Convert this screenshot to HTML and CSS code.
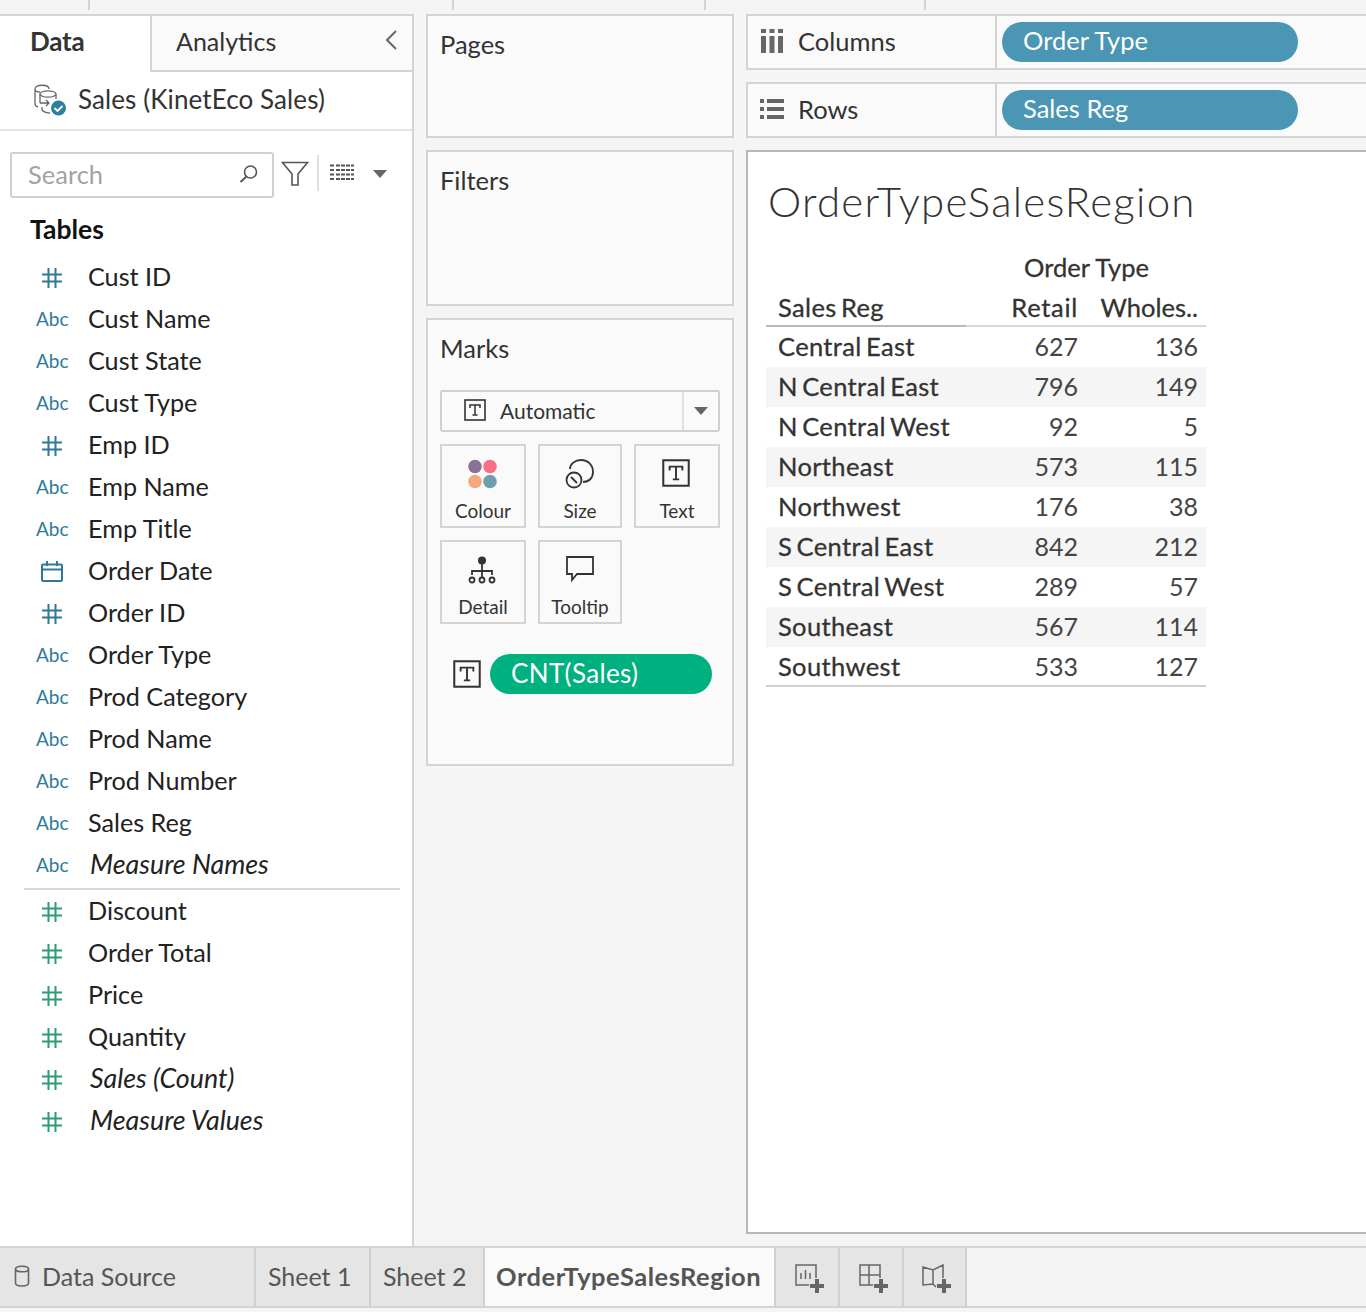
FILE: index.html
```html
<!DOCTYPE html>
<html>
<head>
    <title>OrderTypeSalesRegion</title>
    <link rel="stylesheet" href="styles.css">
</head>
<body>
    <div class="top-strip">
        <span class="tick tick-a"></span>
        <span class="tick tick-b"></span>
        <span class="tick tick-c"></span>
        <span class="tick tick-d"></span>
    </div>

    <div class="workspace">
        <div class="side">
            <div class="side-tabs">
                <div class="tab-data">Data</div>
                <div class="tab-analytics">
                    <span>Analytics</span>
                    <svg class="collapse" width="14" height="22" viewBox="0 0 14 22"><path d="M12 2 3 11l9 9" fill="none" stroke="#666" stroke-width="2"/></svg>
                </div>
            </div>
            <div class="source">
                <svg width="34" height="34" viewBox="0 0 34 34">
                    <g fill="none" stroke="#666" stroke-width="1.300">
                        <path d="M2 6c0-5 14-5 14 0M2 6v15c0 1.500 1 2.500 3 3M2 6c0 2 2 3 5 3"/>
                        <ellipse cx="15" cy="11" rx="8" ry="3.200"/>
                        <path d="M7 11v9M23 11v5M7 20h9M13 17l3 3-3 3M9 24v3c2 2 5 3 8 3"/>
                    </g>
                    <circle cx="25.500" cy="25" r="7.500" fill="#2f7e9f"/>
                    <path d="m21.500 25 3 3 5-5" fill="none" stroke="#fff" stroke-width="1.800"/>
                </svg>
                <span>Sales (KinetEco Sales)</span>
            </div>
            <div class="tools">
                <div class="search">
                    <span>Search</span>
                    <svg width="20" height="20" viewBox="0 0 20 20"><circle cx="11.500" cy="8" r="6" fill="none" stroke="#555" stroke-width="1.600"/><path d="M7.500 12.500 1.500 18" stroke="#555" stroke-width="1.800"/></svg>
                </div>
                <svg class="funnel" width="28" height="26" viewBox="0 0 28 26"><path d="M1.500 1.500h25L17 13v11h-6V13z" fill="none" stroke="#555" stroke-width="1.600"/></svg>
                <span class="tool-sep"></span>
                <svg class="list-view" width="26" height="20" viewBox="0 0 26 20"><path d="M1 2.500h4M7 2.500h18M1 7h4M7 7h18M1 11.500h4M7 11.500h18M1 16h4M7 16h18" stroke="#555" stroke-width="2" stroke-dasharray="4 1"/></svg>
                <span class="caret"></span>
            </div>
            <h2 class="tables-title">Tables</h2>
            <ul class="fields">
                <li><svg class="ico" width="22" height="22" viewBox="0 0 22 22"><use href="#hash-blue"/></svg>Cust ID</li>
                <li><i class="abc">Abc</i>Cust Name</li>
                <li><i class="abc">Abc</i>Cust State</li>
                <li><i class="abc">Abc</i>Cust Type</li>
                <li><svg class="ico" width="22" height="22" viewBox="0 0 22 22"><use href="#hash-blue"/></svg>Emp ID</li>
                <li><i class="abc">Abc</i>Emp Name</li>
                <li><i class="abc">Abc</i>Emp Title</li>
                <li><svg class="ico" width="22" height="22" viewBox="0 0 22 22"><g fill="none" stroke="#2f7a9c" stroke-width="2"><rect x="1" y="3.500" width="20" height="16.500" rx="1"/><path d="M1 8.500h20M6 0v5M16 0v5"/></g></svg>Order Date</li>
                <li><svg class="ico" width="22" height="22" viewBox="0 0 22 22"><use href="#hash-blue"/></svg>Order ID</li>
                <li><i class="abc">Abc</i>Order Type</li>
                <li><i class="abc">Abc</i>Prod Category</li>
                <li><i class="abc">Abc</i>Prod Name</li>
                <li><i class="abc">Abc</i>Prod Number</li>
                <li><i class="abc">Abc</i>Sales Reg</li>
                <li class="generated"><i class="abc">Abc</i>Measure Names</li>
            </ul>
            <ul class="fields measures">
                <li><svg class="ico" width="22" height="22" viewBox="0 0 22 22"><use href="#hash-green"/></svg>Discount</li>
                <li><svg class="ico" width="22" height="22" viewBox="0 0 22 22"><use href="#hash-green"/></svg>Order Total</li>
                <li><svg class="ico" width="22" height="22" viewBox="0 0 22 22"><use href="#hash-green"/></svg>Price</li>
                <li><svg class="ico" width="22" height="22" viewBox="0 0 22 22"><use href="#hash-green"/></svg>Quantity</li>
                <li class="generated"><svg class="ico" width="22" height="22" viewBox="0 0 22 22"><use href="#hash-green"/></svg>Sales (Count)</li>
                <li class="generated"><svg class="ico" width="22" height="22" viewBox="0 0 22 22"><use href="#hash-green"/></svg>Measure Values</li>
            </ul>
        </div>

        <div class="cards">
            <div class="card pages-card">Pages</div>
            <div class="card filters-card">Filters</div>
            <div class="card marks-card">
                <div>Marks</div>
                <div class="mark-type">
                    <div class="mark-type-name">
                        <svg width="22" height="22" viewBox="0 0 22 22"><use href="#t-box"/></svg>
                        <span>Automatic</span>
                    </div>
                    <div class="mark-type-drop"><span class="caret"></span></div>
                </div>
                <div class="mark-grid">
                    <div class="mark-btn">
                        <svg class="shift-left" width="30" height="30" viewBox="0 0 30 30"><circle cx="8" cy="7.500" r="6.800" fill="#8a7298"/><circle cx="23" cy="7.500" r="6.800" fill="#f66f84"/><circle cx="8" cy="22.500" r="6.800" fill="#f3a97c"/><circle cx="23" cy="22.500" r="6.800" fill="#6f9fae"/></svg>
                        <span>Colour</span>
                    </div>
                    <div class="mark-btn">
                        <svg width="30" height="30" viewBox="0 0 30 30"><g fill="none" stroke="#333" stroke-width="1.800"><path d="M5 10C5 5 10 1 16 1c7 0 12 5 12 12 0 6-4 10-10 10"/><circle cx="9" cy="21" r="7.500"/><path d="m6 18 6 6"/></g></svg>
                        <span>Size</span>
                    </div>
                    <div class="mark-btn">
                        <svg class="shift-left" width="28" height="28" viewBox="0 0 22 22"><use href="#t-box"/></svg>
                        <span>Text</span>
                    </div>
                    <div class="mark-btn mark-btn-low">
                        <svg class="shift-left" width="30" height="30" viewBox="0 0 30 30"><circle cx="15" cy="4.500" r="4" fill="#333"/><g fill="none" stroke="#333" stroke-width="1.800"><path d="M15 8v14M5 19v-4h20v4"/><circle cx="5" cy="24" r="2.500"/><circle cx="15" cy="24" r="2.500"/><circle cx="25" cy="24" r="2.500"/></g></svg>
                        <span>Detail</span>
                    </div>
                    <div class="mark-btn mark-btn-low">
                        <svg width="30" height="30" viewBox="0 0 30 30"><path d="M2 1h26v17H12l-5 6v-6H2z" fill="none" stroke="#333" stroke-width="1.800"/></svg>
                        <span>Tooltip</span>
                    </div>
                </div>
                <div class="mark-pill-row">
                    <svg width="28" height="28" viewBox="0 0 22 22"><use href="#t-box"/></svg>
                    <div class="pill pill-green">CNT(Sales)</div>
                </div>
            </div>
        </div>

        <div class="main">
            <div class="shelf">
                <div class="shelf-label">
                    <div class="shelf-icon"><svg width="22" height="24" viewBox="0 0 22 24"><path d="M0 0h5v4H0zM8.500 0h5v4h-5zM17 0h5v4h-5zM0 7h5v17H0zM8.500 7h5v17h-5zM17 7h5v17h-5z" fill="#666"/></svg></div>
                    <span>Columns</span>
                </div>
                <div class="pill pill-blue">Order Type</div>
            </div>
            <div class="shelf">
                <div class="shelf-label">
                    <div class="shelf-icon"><svg width="24" height="20" viewBox="0 0 24 20"><path d="M0 0h4v4H0zM7 0h17v4H7zM0 8h4v4H0zM7 8h17v4H7zM0 16h4v4H0zM7 16h17v4H7z" fill="#666"/></svg></div>
                    <span>Rows</span>
                </div>
                <div class="pill pill-blue">Sales Reg</div>
            </div>
            <div class="view">
                <div class="view-title">OrderTypeSalesRegion</div>
                <div class="crosstab">
                    <div class="xt-top">Order Type</div>
                    <div class="xt-head">
                        <span class="xt-name">Sales Reg</span>
                        <span class="xt-num">Retail</span>
                        <span class="xt-num">Wholes..</span>
                    </div>
                    <div class="xt-row"><span class="xt-name">Central East</span><span class="xt-num">627</span><span class="xt-num">136</span></div>
                    <div class="xt-row"><span class="xt-name">N Central East</span><span class="xt-num">796</span><span class="xt-num">149</span></div>
                    <div class="xt-row"><span class="xt-name">N Central West</span><span class="xt-num">92</span><span class="xt-num">5</span></div>
                    <div class="xt-row"><span class="xt-name">Northeast</span><span class="xt-num">573</span><span class="xt-num">115</span></div>
                    <div class="xt-row"><span class="xt-name">Northwest</span><span class="xt-num">176</span><span class="xt-num">38</span></div>
                    <div class="xt-row"><span class="xt-name">S Central East</span><span class="xt-num">842</span><span class="xt-num">212</span></div>
                    <div class="xt-row"><span class="xt-name">S Central West</span><span class="xt-num">289</span><span class="xt-num">57</span></div>
                    <div class="xt-row"><span class="xt-name">Southeast</span><span class="xt-num">567</span><span class="xt-num">114</span></div>
                    <div class="xt-row"><span class="xt-name">Southwest</span><span class="xt-num">533</span><span class="xt-num">127</span></div>
                </div>
            </div>
        </div>
    </div>

    <div class="sheet-bar">
        <div class="sheet sheet-source">
            <svg width="16" height="22" viewBox="0 0 16 22"><g fill="none" stroke="#666" stroke-width="1.600"><ellipse cx="8" cy="4" rx="6.500" ry="2.800"/><path d="M1.500 4v14c0 4 13 4 13 0V4"/></g></svg>
            <span>Data Source</span>
        </div>
        <div class="sheet sheet-one">Sheet 1</div>
        <div class="sheet sheet-two">Sheet 2</div>
        <div class="sheet sheet-active">OrderTypeSalesRegion</div>
        <div class="sheet sheet-add">
            <svg width="30" height="30" viewBox="0 0 30 30"><g fill="none" stroke="#666" stroke-width="1.500"><path d="M15 21H2V1h20v13"/><path d="M7 9v6M11.500 6v9M16 9v6"/></g><path d="M21 15h4v5h5v4h-5v5h-4v-5h-5v-4h5z" fill="#666"/></svg>
        </div>
        <div class="sheet sheet-add">
            <svg width="30" height="30" viewBox="0 0 30 30"><g fill="none" stroke="#666" stroke-width="1.500"><path d="M15 21H2V1h20v13M2 11h20M11 1v20"/></g><path d="M21 15h4v5h5v4h-5v5h-4v-5h-5v-4h5z" fill="#666"/></svg>
        </div>
        <div class="sheet sheet-add">
            <svg width="30" height="30" viewBox="0 0 30 30"><g fill="none" stroke="#666" stroke-width="1.500"><path d="M15 23 12 20 2 21V3l10 3 10-5v13M12 6v14"/></g><path d="M21 15h4v5h5v4h-5v5h-4v-5h-5v-4h5z" fill="#666"/></svg>
        </div>
    </div>

    <svg class="defs" width="0" height="0">
        <defs>
            <g id="hash-blue" fill="none" stroke="#2f7a9c" stroke-width="2"><path d="M1 7.500h20M1 14.500h20M7.500 1v20M14.500 1v20"/></g>
            <g id="hash-green" fill="none" stroke="#2f9c77" stroke-width="2"><path d="M1 7.500h20M1 14.500h20M7.500 1v20M14.500 1v20"/></g>
            <g id="t-box"><rect x="1" y="1" width="20" height="20" fill="none" stroke="#333" stroke-width="1.600"/><path d="M6 9V6h10v3M11 6v10M8.500 16h5" fill="none" stroke="#333" stroke-width="1.500"/></g>
        </defs>
    </svg>
</body>
</html>
```

FILE: styles.css
```css
* {
    box-sizing: border-box;
}

html, body {
    margin: 0;
    padding: 0;
}

body {
    width: 1366px;
    height: 1312px;
    overflow: hidden;
    font-family: Lato, "Open Sans", sans-serif;
    font-size: 25.500px;
    color: #333;
    background-color: #f5f5f5;
    display: flex;
    flex-direction: column;
}

.defs {
    position: absolute;
}

/* strip above the panes */
.top-strip {
    height: 14px;
    flex: none;
    position: relative;
}

.tick {
    position: absolute;
    top: 0;
    width: 2px;
    height: 10px;
    background-color: #d4d4d4;
}

.tick-a { left: 88px; }
.tick-b { left: 452px; }
.tick-c { left: 704px; }
.tick-d { left: 924px; }

.workspace {
    height: 1232px;
    flex: none;
    display: flex;
}

/* data pane */
.side {
    width: 414px;
    flex: none;
    background-color: #fff;
    border-top: 2px solid #d4d4d4;
    border-right: 2px solid #d4d4d4;
}

.side-tabs {
    display: flex;
    height: 56px;
}

.tab-data {
    width: 150px;
    padding: 9px 0 0 30px;
    font-size: 26px;
    font-weight: 700;
    letter-spacing: -0.2px;
}

.tab-analytics {
    flex: 1;
    display: flex;
    align-items: flex-start;
    justify-content: space-between;
    padding: 10px 14px 0 24px;
    font-size: 25px;
    background-color: #fafafa;
    border-left: 2px solid #d4d4d4;
    border-bottom: 2px solid #d4d4d4;
}

.collapse {
    margin-top: 3px;
}

.source {
    height: 59px;
    display: flex;
    align-items: center;
    gap: 11px;
    padding: 0 0 4px 33px;
    font-size: 26px;
    letter-spacing: 0.1px;
    border-bottom: 2px solid #e4e4e4;
}

.source svg {
    margin-top: 2px;
}

.tools {
    display: flex;
    align-items: center;
    margin-top: 21px;
    padding-left: 10px;
}

.search {
    width: 264px;
    height: 46px;
    display: flex;
    align-items: center;
    justify-content: space-between;
    padding: 0 13px 2px 16px;
    color: #a3a3a3;
    border: 2px solid #d0d0d0;
    border-radius: 3px;
}

.funnel {
    margin: 0 0 3px 7px;
}

.tool-sep {
    width: 2px;
    height: 36px;
    margin: 0 10px 4px 8px;
    background-color: #e0e0e0;
}

.list-view {
    margin-bottom: 4px;
}

.caret {
    display: inline-block;
    width: 0;
    height: 0;
    border-left: 7.500px solid transparent;
    border-right: 7.500px solid transparent;
    border-top: 8px solid #666;
}

.tools .caret {
    margin: 0 0 2px 18px;
}

.tables-title {
    margin: 13px 0 0 30px;
    font-size: 26.500px;
    font-weight: 700;
    line-height: 36px;
    color: #111;
}

.fields {
    list-style: none;
    margin: 8px 12px 0 24px;
    padding: 0 0 3px;
    font-size: 25.200px;
    color: #222;
    border-bottom: 2px solid #d8d8d8;
}

.fields li {
    height: 42px;
    display: flex;
    align-items: center;
}

.fields li .ico {
    margin: 3px 25px 0 17px;
    flex: none;
}

.abc {
    width: 64px;
    padding-left: 12px;
    flex: none;
    font-style: normal;
    font-size: 19px;
    color: #2f7a9c;
}

.fields li.generated {
    font-style: italic;
    font-size: 26.800px;
}

.generated .abc {
    width: 66px;
}

.fields li.generated .ico {
    margin-right: 27px;
}

.measures {
    margin-top: -1px;
    padding: 0;
    border-bottom: none;
}

/* pages, filters, marks */
.cards {
    width: 308px;
    flex: none;
    margin-left: 12px;
    display: flex;
    flex-direction: column;
    gap: 12px;
}

.card {
    padding: 13px 12px 0;
    background-color: #fafafa;
    border: 2px solid #d4d4d4;
}

.pages-card {
    height: 124px;
}

.filters-card {
    height: 156px;
}

.marks-card {
    height: 448px;
}

.mark-type {
    display: flex;
    height: 42px;
    margin-top: 27px;
    width: 280px;
    font-size: 21px;
    border: 2px solid #d0d0d0;
    border-radius: 3px;
}

.mark-type-name {
    flex: 1;
    display: flex;
    align-items: center;
    gap: 14px;
    padding: 0 0 2px 22px;
}

.mark-type-drop {
    width: 36px;
    display: flex;
    align-items: center;
    justify-content: center;
    border-left: 2px solid #e0e0e0;
}

.mark-grid {
    display: grid;
    grid-template-columns: 86px 84px 86px;
    grid-auto-rows: 84px;
    column-gap: 12px;
    row-gap: 12px;
    margin-top: 12px;
}

.mark-btn {
    display: flex;
    flex-direction: column;
    align-items: center;
    padding: 13px 0 4px;
    font-size: 19px;
    border: 2px solid #d4d4d4;
}

.mark-btn-low {
    padding-top: 14px;
}

.mark-btn span {
    margin-top: auto;
}

.shift-left {
    margin-right: 2px;
}

.mark-pill-row {
    display: flex;
    align-items: center;
    gap: 9px;
    margin: 30px 0 0 13px;
}

.pill {
    height: 40px;
    border-radius: 20px;
    padding-left: 21px;
    line-height: 38px;
    color: #fff;
}

.pill-green {
    width: 222px;
    font-size: 26px;
    letter-spacing: 0.35px;
    background-color: #00b180;
}

/* shelves and view */
.main {
    flex: 1;
    margin-left: 12px;
    min-width: 0;
    display: flex;
    flex-direction: column;
    gap: 12px;
}

.shelf {
    height: 56px;
    display: flex;
    align-items: center;
    background-color: #fafafa;
    border: 2px solid #d4d4d4;
    border-right: none;
}

.shelf-label {
    width: 249px;
    height: 100%;
    flex: none;
    display: flex;
    align-items: center;
    gap: 14px;
    padding: 0 0 2px 12px;
    border-right: 2px solid #d4d4d4;
}

.shelf-icon {
    width: 24px;
    display: flex;
    justify-content: center;
}

.pill-blue {
    width: 296px;
    margin-left: 5px;
    line-height: 36px;
    background-color: #4a96b4;
}

.view {
    height: 1084px;
    padding: 24px 0 0 18px;
    background-color: #fff;
    border: 2px solid #b8b8b8;
    border-right: none;
}

.view-title {
    margin-left: 2px;
    font-size: 42px;
    letter-spacing: 1.250px;
    line-height: 50px;
    font-weight: 300;
    color: #333;
}

.crosstab {
    width: 440px;
    margin-top: 21px;
    border-bottom: 2px solid #d0d0d0;
    color: #333;
    -webkit-text-stroke: 0.3px #333;
}

.xt-top {
    height: 40px;
    line-height: 40px;
    padding-left: 258px;
}

.xt-head, .xt-row {
    display: flex;
    height: 40px;
    line-height: 38px;
}

.xt-head {
    line-height: 40px;
    border-bottom: 2px solid #d8d8d8;
}

.xt-row:last-child {
    height: 38px;
}

.xt-name {
    width: 200px;
    padding-left: 12px;
    letter-spacing: 0.35px;
    word-spacing: -2.500px;
}

.xt-head .xt-name {
    height: 40px;
    border-bottom: 2px solid #b8b8b8;
}

.xt-num {
    width: 120px;
    padding-right: 8px;
    text-align: right;
}

.xt-head .xt-num:nth-child(2) {
    letter-spacing: 0.7px;
}

.xt-row .xt-num {
    font-size: 25px;
    color: #444;
    -webkit-text-stroke: 0;
}

.xt-row:nth-child(even) {
    background-color: #f5f5f5;
}

/* sheet tabs */
.sheet-bar {
    height: 62px;
    flex: none;
    display: flex;
    background-color: #f3f3f3;
    border-top: 2px solid #d4d4d4;
    border-bottom: 2px solid #d4d4d4;
    color: #555;
}

.sheet {
    display: flex;
    align-items: center;
    padding-bottom: 2px;
    font-size: 25px;
    background-color: #e5e5e5;
    border-right: 2px solid #d0d0d0;
}

.sheet-source {
    width: 256px;
    gap: 12px;
    padding-left: 14px;
}

.sheet-one {
    width: 115px;
    padding-left: 12px;
}

.sheet-two {
    width: 114px;
    padding-left: 12px;
}

.sheet-active {
    width: 291px;
    padding-left: 11px;
    font-size: 25.500px;
    font-weight: 700;
    letter-spacing: 0.5px;
    background-color: #fafafa;
}

.sheet-add {
    width: 64px;
    padding: 4px 0 0 3px;
    justify-content: center;
}

.sheet-add:last-child {
    width: 63px;
}
```
